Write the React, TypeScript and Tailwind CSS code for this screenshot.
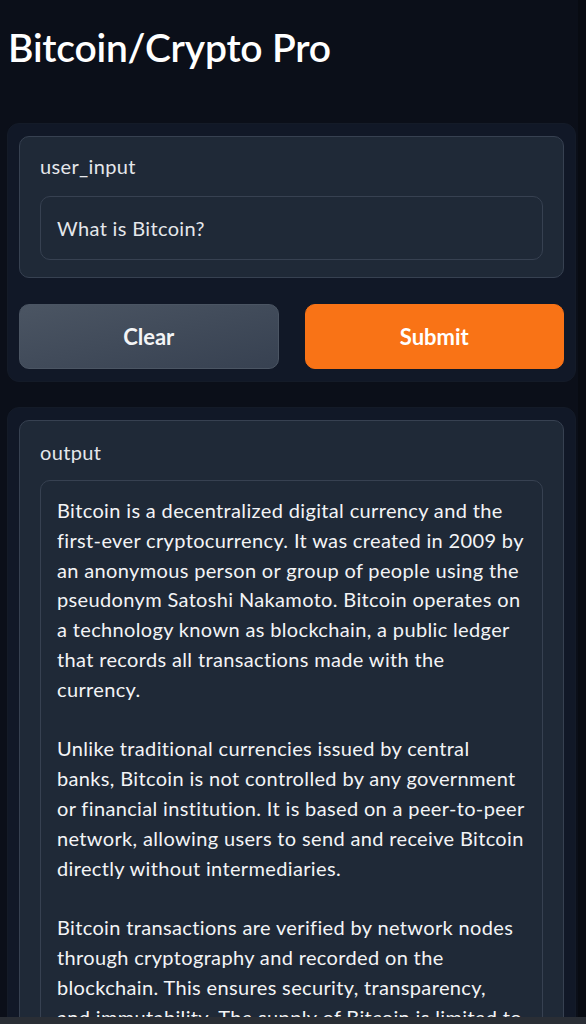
export default function App() {
  const answer = [
    "Bitcoin is a decentralized digital currency and the",
    "first-ever cryptocurrency. It was created in 2009 by",
    "an anonymous person or group of people using the",
    "pseudonym Satoshi Nakamoto. Bitcoin operates on",
    "a technology known as blockchain, a public ledger",
    "that records all transactions made with the",
    "currency.",
    "",
    "Unlike traditional currencies issued by central",
    "banks, Bitcoin is not controlled by any government",
    "or financial institution. It is based on a peer-to-peer",
    "network, allowing users to send and receive Bitcoin",
    "directly without intermediaries.",
    "",
    "Bitcoin transactions are verified by network nodes",
    "through cryptography and recorded on the",
    "blockchain. This ensures security, transparency,",
    "and immutability. The supply of Bitcoin is limited to",
    "21 million coins, making it a scarce digital asset.",
  ].join("\n");

  return (
    <div className="flex min-h-screen bg-[#080b12] font-['Lato',sans-serif] text-[#f3f4f6]">
      <main className="flex w-[578px] flex-col bg-[#0b0f19] pl-[7px] pr-[2px]">
        <h1 className="pt-[22px] pb-[51px] pl-px text-[39px] font-semibold leading-[50px] tracking-[-0.2px] text-white">
          Bitcoin/Crypto Pro
        </h1>

        <section className="flex flex-col gap-[26px] rounded-[12px] border border-[#141b28] bg-[#111827] px-[11px] pt-3 pb-3">
          <div className="flex flex-col gap-[15px] rounded-[10px] border border-[#374151] bg-[#1f2937] px-5 pt-[14px] pb-[17px]">
            <label className="text-[20px] leading-[30px] tracking-[0.35px] text-[#e5e7eb]">user_input</label>
            <div className="flex h-[64px] items-center rounded-[10px] border border-[#374151] bg-[#1f2937] px-4 text-[20px] tracking-[0.35px] text-[#e5e7eb]">
              What is Bitcoin?
            </div>
          </div>
          <div className="grid grid-cols-2 gap-[26px]">
            <button className="h-[65px] rounded-[10px] border border-[#4b5563] bg-gradient-to-br from-[#4b5563] to-[#374151] text-[22px] font-bold text-[#f3f4f6]">
              Clear
            </button>
            <button className="h-[65px] rounded-[10px] border border-[#f97316] bg-[#f97316] text-[22px] font-bold text-white">
              Submit
            </button>
          </div>
        </section>

        <section className="mt-[25px] rounded-[12px] border border-[#141b28] bg-[#111827] px-[11px] pt-3 pb-3">
          <div className="flex flex-col gap-[13px] rounded-[10px] border border-[#374151] bg-[#1f2937] px-5 pt-4 pb-5">
            <label className="text-[20px] leading-[30px] tracking-[0.35px] text-[#e5e7eb]">output</label>
            <div className="overflow-hidden whitespace-pre rounded-[10px] border border-[#374151] bg-[#1f2937] px-4 py-[15px] text-[20px] leading-[29.8px] tracking-[0.35px] text-[#f3f4f6]">
              {answer}
            </div>
          </div>
        </section>
      </main>
      <div className="fixed inset-x-0 bottom-0 h-[7px] bg-[#2a2e35]" />
    </div>
  );
}
